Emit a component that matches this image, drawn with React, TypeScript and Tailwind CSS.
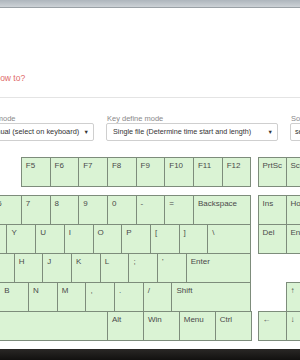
type K = { l?: string; w: number; blank?: boolean };

const U = 28.7;

const fRow: K[] = [
  { l: "Esc", w: 1 },
  { w: 1, blank: true },
  { l: "F1", w: 1 },
  { l: "F2", w: 1 },
  { l: "F3", w: 1 },
  { l: "F4", w: 1 },
  { w: 1, blank: true },
  { l: "F5", w: 1 },
  { l: "F6", w: 1 },
  { l: "F7", w: 1 },
  { l: "F8", w: 1 },
  { l: "F9", w: 1 },
  { l: "F10", w: 1 },
  { l: "F11", w: 1 },
  { l: "F12", w: 1 },
];

const mainRows: K[][] = [
  ["`", "1", "2", "3", "4", "5", "6", "7", "8", "9", "0", "-", "="].map((l) => ({ l, w: 1 })).concat([{ l: "Backspace", w: 2 }]),
  [{ l: "Tab", w: 1.5 }, ...["Q", "W", "E", "R", "T", "Y", "U", "I", "O", "P", "[", "]"].map((l) => ({ l, w: 1 })), { l: "\\", w: 1.5 }],
  [{ l: "Caps", w: 1.75 }, ...["A", "S", "D", "F", "G", "H", "J", "K", "L", ";", "'"].map((l) => ({ l, w: 1 })), { l: "Enter", w: 2.25 }],
  [{ l: "Shift", w: 2.25 }, ...["Z", "X", "C", "V", "B", "N", "M", ",", ".", "/"].map((l) => ({ l, w: 1 })), { l: "Shift", w: 2.75 }],
  [
    { l: "Ctrl", w: 1.25 },
    { l: "Win", w: 1.25 },
    { l: "Alt", w: 1.25 },
    { l: "", w: 6.25 },
    { l: "Alt", w: 1.25 },
    { l: "Win", w: 1.25 },
    { l: "Menu", w: 1.25 },
    { l: "Ctrl", w: 1.25 },
  ],
];

const navRows: (string | null)[][] = [
  ["Ins", "Home", "PgUp"],
  ["Del", "End", "PgDn"],
  [null, null, null],
  [null, "↑", null],
  ["←", "↓", "→"],
];

function Key({ label, width, h = 30 }: { label?: string; width: number; h?: number }) {
  return (
    <div
      className="shrink-0 -mr-px border border-[#7d8c7b] bg-[#daf3d4] pl-[4px] pt-[3px] text-[8px] leading-[10px] text-[#4a4a4a]"
      style={{ width: width + 1, height: h }}
    >
      {label}
    </div>
  );
}

function Gap({ width, h = 30 }: { width: number; h?: number }) {
  return <div className="shrink-0 -mr-px" style={{ width: width + 1, height: h }} />;
}

export default function App() {
  return (
    <div className="relative h-[360px] w-[300px] overflow-hidden bg-white font-['Liberation_Sans',Arial,sans-serif]">
      <div className="h-[8px] bg-gradient-to-b from-[#aeb6bd] to-[#cdd2d6] border-b border-[#9aa1a6]" />

      <div className="h-[90px] border-b border-[#e4e4e4] pt-[65px] text-[8.5px] leading-[10px]">
        <span className="-ml-[6px] text-[#e06a68]">How to?</span>
      </div>

      <div className="mt-[17px] flex gap-[12px] -ml-[22px] whitespace-nowrap">
        <div className="w-[116px] shrink-0">
          <div className="text-[7.5px] leading-[8px] text-[#8a8a8a]">Input mode</div>
          <div className="flex h-[18px] items-center justify-between rounded-[2px] border border-[#cfcfcf] pl-[7px] pr-[4px] text-[7.4px] text-[#333]">
            <span>Manual (select on keyboard)</span>
            <span className="text-[5.5px]">▼</span>
          </div>
        </div>
        <div className="w-[172px] shrink-0">
          <div className="pl-px text-[7.5px] leading-[8px] text-[#8a8a8a]">Key define mode</div>
          <div className="flex h-[18px] items-center justify-between rounded-[2px] border border-[#cfcfcf] pl-[6px] pr-[4px] text-[7.2px] text-[#333]">
            <span>Single file (Determine time start and length)</span>
            <span className="text-[5.5px]">▼</span>
          </div>
        </div>
        <div className="w-[120px] shrink-0">
          <div className="pl-px text-[7.5px] leading-[8px] text-[#8a8a8a]">Sound file</div>
          <div className="flex h-[18px] items-center rounded-[2px] border border-[#cfcfcf] pl-[4px] text-[7.2px] text-[#333]">
            <span>select file</span>
          </div>
        </div>
      </div>

      <div className="mt-[16px] -ml-[180px] flex gap-[7px]">
        <div className="shrink-0">
          <div className="mb-[8px] flex">
            {fRow.map((k, i) =>
              k.blank ? <Gap key={i} width={k.w * U} /> : <Key key={i} label={k.l} width={k.w * U} />
            )}
          </div>
          {mainRows.map((row, r) => (
            <div key={r} className="-mb-px flex">
              {row.map((k, i) => (
                <Key key={i} label={k.l} width={k.w * U} />
              ))}
            </div>
          ))}
        </div>
        <div className="shrink-0">
          <div className="mb-[8px] flex">
            {["PrtSc", "ScrLk", "Pause"].map((l) => (
              <Key key={l} label={l} width={28} />
            ))}
          </div>
          {navRows.map((row, r) => (
            <div key={r} className="-mb-px flex">
              {row.map((l, i) => (l === null ? <Gap key={i} width={28} /> : <Key key={i} label={l} width={28} />))}
            </div>
          ))}
        </div>
      </div>

      <div className="absolute bottom-0 left-0 h-[11px] w-full bg-gradient-to-b from-[#2a2826] to-[#121110]" />
    </div>
  );
}
